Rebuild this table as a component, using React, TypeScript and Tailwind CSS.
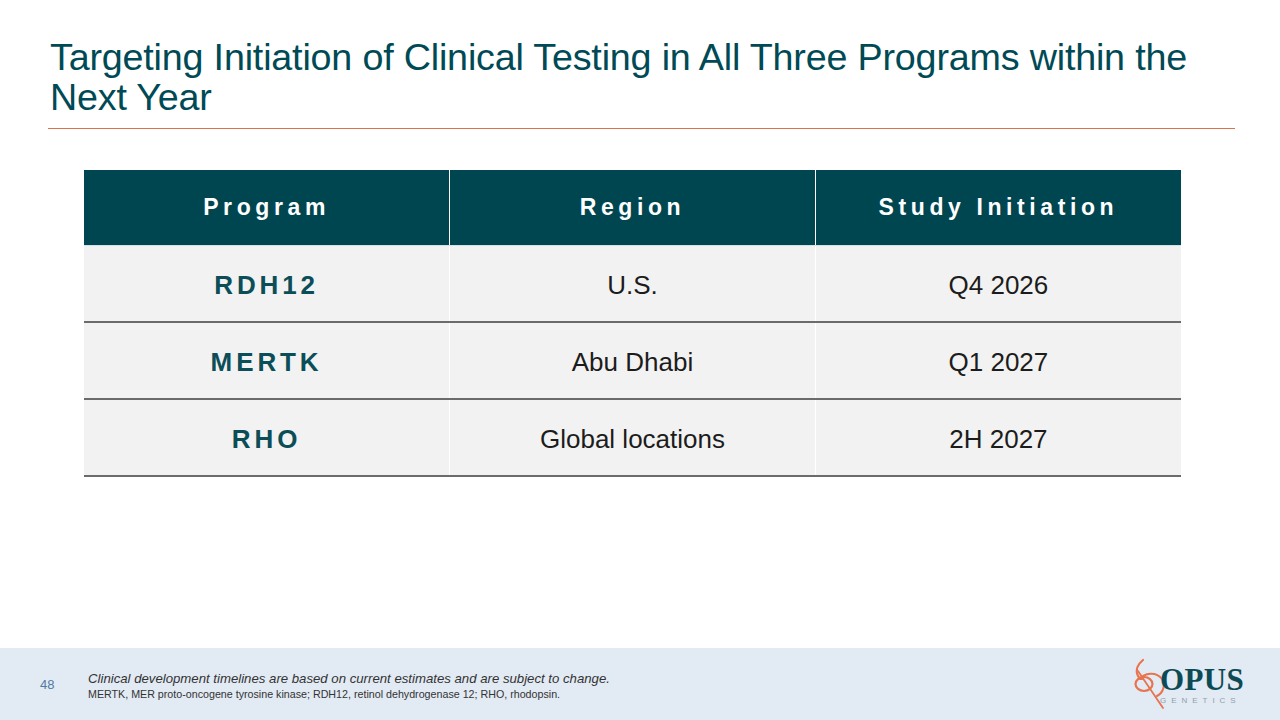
import React from "react";

const rows = [
  { program: "RDH12", region: "U.S.", start: "Q4 2026" },
  { program: "MERTK", region: "Abu Dhabi", start: "Q1 2027" },
  { program: "RHO", region: "Global locations", start: "2H 2027" },
];

function Logo() {
  return (
    <div className="flex items-center">
      <svg width="44" height="58" viewBox="0 4 44 58" className="-mr-[10px] mt-[2px]">
        <g fill="none" stroke="#e8734f" strokeLinecap="round">
          {/* top hook */}
          <path d="M17 8 C12 12 9 18 12 24 C13 26 15 27 16 27" strokeWidth="2.2" />
          {/* small loop */}
          <ellipse cx="18" cy="32" rx="8.5" ry="7" strokeWidth="2.2" />
          {/* big arc */}
          <path d="M14 27 C18 21 30 19 36 27 C40 33 37 41 31 44" strokeWidth="2" />
          {/* diagonal */}
          <path d="M12 19 L37 56" strokeWidth="1.8" />
        </g>
      </svg>
      <div className="flex flex-col items-start leading-none">
        <span className="text-[31px] font-['Liberation_Serif',serif] font-bold text-[#0d4a55] tracking-[0.01em]">
          OPUS
        </span>
        <span className="mt-[2px] text-[8px] tracking-[0.62em] text-[#8fa0aa] font-['Liberation_Sans',Arial,sans-serif]">
          GENETICS
        </span>
      </div>
    </div>
  );
}

export default function App() {
  return (
    <div className="w-[1280px] h-[720px] bg-white flex flex-col font-['Liberation_Sans',Arial,sans-serif] overflow-hidden">
      {/* Title */}
      <div className="px-[48px] pt-[37px]">
        <h1 className="pl-[2px] w-[1175px] text-[37.7px] leading-[40px] text-[#004a55] tracking-[-0.005em]">
          Targeting Initiation of Clinical Testing in All Three Programs within the Next Year
        </h1>
        <div className="mt-[11px] h-px w-[1187px] bg-[#d9734e]" />
      </div>

      {/* Table */}
      <div className="pl-[84px] pt-[41px]">
        <table className="w-[1097px] border-collapse table-fixed">
          <thead>
            <tr className="h-[75px] bg-[#004651] text-white">
              {["Program", "Region", "Study Initiation"].map((h, i) => (
                <th
                  key={h}
                  className={`text-[23px] font-bold tracking-[0.2em] border-b border-[#cfe4ea] ${
                    i < 2 ? "border-r border-r-white" : ""
                  }`}
                >
                  {h}
                </th>
              ))}
            </tr>
          </thead>
          <tbody>
            {rows.map((r) => (
              <tr key={r.program} className="h-[77px] bg-[#f2f2f2] border-b-2 border-[#6b6b6b]">
                <td className="pt-[4px] text-center text-[26px] font-bold tracking-[0.15em] text-[#0b4e58] border-r border-white">
                  {r.program}
                </td>
                <td className="pt-[4px] text-center text-[26px] text-[#1c1c1c] border-r border-white">{r.region}</td>
                <td className="pt-[4px] text-center text-[26px] text-[#1c1c1c]">{r.start}</td>
              </tr>
            ))}
          </tbody>
        </table>
      </div>

      {/* Footer */}
      <div className="mt-auto h-[72px] bg-[#e2eaf3] flex items-center pl-[40px] pr-[36px]">
        <span className="w-[48px] text-[13px] text-[#4f7aa3] pt-[2px]">48</span>
        <div className="flex flex-col pt-[2px]">
          <span className="text-[13.2px] leading-[17px] italic text-[#333]">
            Clinical development timelines are based on current estimates and are subject to change.
          </span>
          <span className="text-[10.7px] leading-[14px] text-[#333]">
            MERTK, MER proto-oncogene tyrosine kinase; RDH12, retinol dehydrogenase 12; RHO, rhodopsin.
          </span>
        </div>
        <div className="ml-auto">
          <Logo />
        </div>
      </div>
    </div>
  );
}
